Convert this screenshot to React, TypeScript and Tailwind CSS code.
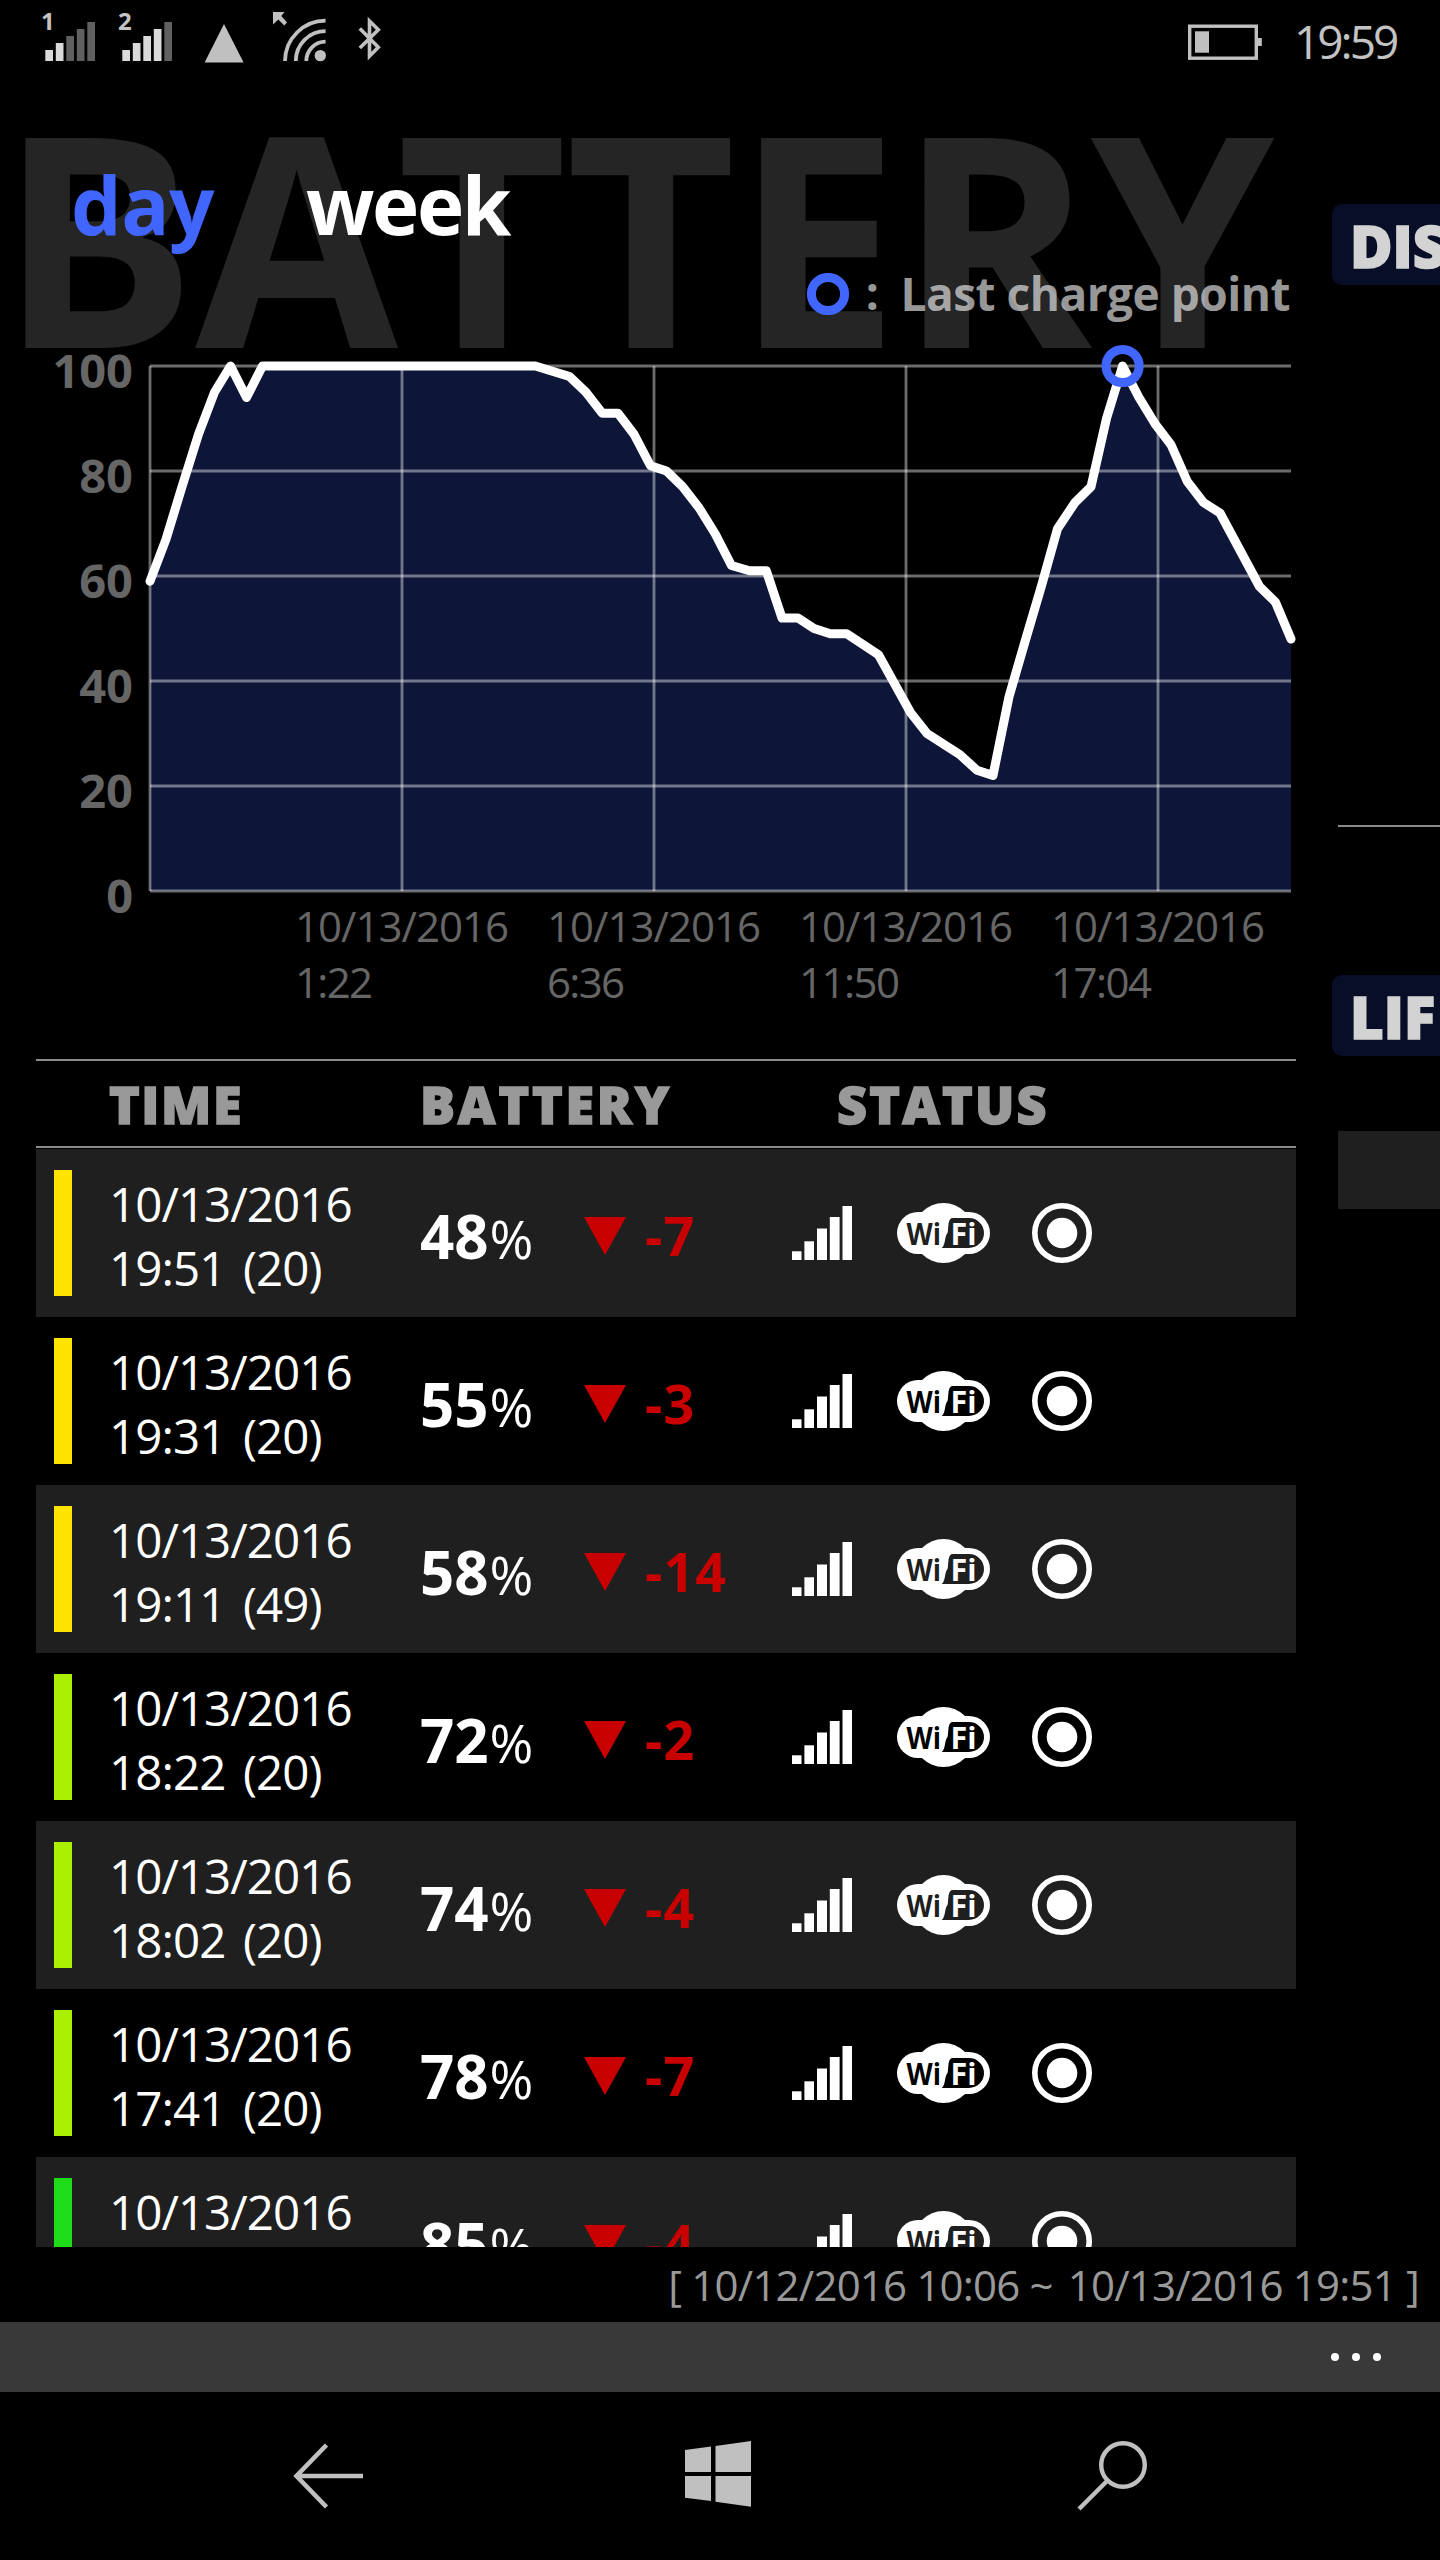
const DATA: [number, number][] = [
  [150, 59], [166, 67], [182, 77], [198.5, 87], [214.5, 95], [230.5, 100], [246.5, 94], [262.5, 100],
  [535.3, 100], [569.5, 98], [586, 95], [602.3, 91], [618, 91], [634, 87], [650.5, 81], [666.5, 80],
  [682.7, 77], [699, 73], [715.3, 68], [731.5, 62], [749.5, 61], [766.3, 61], [782, 52], [798, 52],
  [814, 50], [830.3, 49], [846.7, 49], [862.6, 47], [878.5, 45], [894.5, 39.5], [910.5, 34], [927, 30],
  [943.3, 28], [959.7, 26], [977, 23], [993, 22], [1009, 37], [1025, 47.5], [1041.3, 58], [1057.5, 69],
  [1075, 74], [1091, 77], [1106.5, 90], [1122.6, 100], [1139, 94], [1155, 89], [1171, 85], [1187.3, 78],
  [1203.5, 74], [1220, 72], [1259.5, 58], [1275.5, 55], [1291, 48],
];

const valueToY = (value: number) => 891 - value * 5.25;
const linePoints = DATA.map(([x, v]) => `${x},${valueToY(v)}`).join(" ");

const X_LABELS = [
  { x: 295, date: "10/13/2016", time: "1:22", width: 78 },
  { x: 547, date: "10/13/2016", time: "6:36", width: 78 },
  { x: 799, date: "10/13/2016", time: "11:50", width: 101 },
  { x: 1051, date: "10/13/2016", time: "17:04", width: 101 },
];

const ROWS = [
  { time: "19:51", mins: "(20)", level: 48, delta: "-7", bar: "bg-[#ffe400]" },
  { time: "19:31", mins: "(20)", level: 55, delta: "-3", bar: "bg-[#ffe400]" },
  { time: "19:11", mins: "(49)", level: 58, delta: "-14", bar: "bg-[#ffe400]" },
  { time: "18:22", mins: "(20)", level: 72, delta: "-2", bar: "bg-[#aaf000]" },
  { time: "18:02", mins: "(20)", level: 74, delta: "-4", bar: "bg-[#aaf000]" },
  { time: "17:41", mins: "(20)", level: 78, delta: "-7", bar: "bg-[#aaf000]" },
  { time: "17:21", mins: "(20)", level: 85, delta: "-4", bar: "bg-[#1edc19]" },
];

function SimSignal({ label, level }: { label: string; level: number }) {
  return (
    <div className="relative h-[64px] w-[55px]">
      <span className="absolute left-0 top-[8px] text-[24px] font-bold leading-[26px] text-[#c3c3c3]">{label}</span>
      <svg className="absolute left-0 top-0" width="55" height="64">
        {[0, 1, 2, 3, 4].map((i) => (
          <rect key={i} x={4.3 + i * 10.5} y={50 - i * 7} width="7.7" height={11 + i * 7} fill={i < level ? "#dadada" : "#606060"} />
        ))}
      </svg>
    </div>
  );
}

function StatusBar() {
  return (
    <header className="flex h-[84px] items-start justify-between pl-[41px] pr-[43px]">
      <div className="flex">
        <SimSignal label="1" level={2} />
        <div className="w-[22px]" />
        <SimSignal label="2" level={4} />
        <svg width="270" height="64" viewBox="173 0 270 64" fill="none">
          <path d="M224 24 L243.6 62.5 H204.6 Z" fill="#c0c0c0" />
          <g stroke="#c0c0c0" strokeWidth="3.8">
            <path d="M285 61 A40.6 40.6 0 0 1 325.6 20.7" />
            <path d="M295.8 61 A29.8 29.8 0 0 1 325.6 31.2" />
            <path d="M306.3 61 A19.3 19.3 0 0 1 325.6 41.7" />
          </g>
          <circle cx="320.3" cy="55.6" r="5.7" fill="#c0c0c0" />
          <path d="M273 12 H284.5 L281.3 16 L287 22.5 L284.3 25.5 L278.3 19.5 L273 24.5 Z" fill="#c0c0c0" />
          <path d="M359.8 28.5 L378.3 47.3 L369.5 56.2 V21 L378.3 29.7 L359.8 48" stroke="#c0c0c0" strokeWidth="3.6" />
        </svg>
      </div>
      <div className="flex">
        <svg width="106" height="64" viewBox="1188 0 106 64">
          <rect x="1189.7" y="26.2" width="66.6" height="32" fill="none" stroke="#c0c0c0" strokeWidth="3.4" />
          <rect x="1195" y="31.3" width="14" height="21.4" fill="#c0c0c0" />
          <rect x="1258" y="38" width="3.8" height="8" fill="#c0c0c0" />
        </svg>
        <span className="mt-[11px] w-[103px] text-[46px] leading-[60px] tracking-[-3px] text-[#c3c3c3]">19:59</span>
      </div>
    </header>
  );
}

function Chart() {
  return (
    <svg className="block" width="1332" height="737" viewBox="0 322 1332 737">
      <polygon points={`150,891 ${linePoints} 1291,891`} fill="#0d1538" />
      <g stroke="#ffffff" strokeOpacity="0.42" strokeWidth="2.8">
        {[0, 20, 40, 60, 80, 100].map((v) => (
          <line key={v} x1="150" x2="1291" y1={valueToY(v)} y2={valueToY(v)} />
        ))}
        {[150, 402, 654, 906, 1158].map((x) => (
          <line key={x} x1={x} x2={x} y1="366" y2="891" />
        ))}
      </g>
      <polyline points={linePoints} fill="none" stroke="#ffffff" strokeWidth="9" strokeLinecap="round" strokeLinejoin="round" />
      <circle cx="1122.6" cy="366" r="16.6" fill="none" stroke="#4066ff" strokeWidth="9" />
      <g fill="#666666" fontSize="47" fontWeight="700" textAnchor="end">
        {[0, 20, 40, 60, 80, 100].map((v) => (
          <text key={v} x="133" y={valueToY(v) + 22}>{v}</text>
        ))}
      </g>
      <g fill="#666666" fontSize="42">
        {X_LABELS.map((l) => (
          <g key={l.x}>
            <text x={l.x} y="942" textLength="214">{l.date}</text>
            <text x={l.x} y="998" textLength={l.width}>{l.time}</text>
          </g>
        ))}
      </g>
    </svg>
  );
}

function StatusIcons({ bg }: { bg: string }) {
  return (
    <svg className="block" width="310" height="60" viewBox="792 1203 310 60">
      <g fill="#fff">
        <rect x="792" y="1251.3" width="9.5" height="8.7" />
        <rect x="804.4" y="1241.3" width="9.6" height="18.7" />
        <rect x="817" y="1228.5" width="10" height="31.5" />
        <rect x="829.8" y="1217" width="9.8" height="43" />
        <rect x="842.5" y="1206" width="9.5" height="54" />
        <circle cx="943.5" cy="1233" r="30" />
        <rect x="897" y="1212" width="93" height="42" rx="21" />
      </g>
      <path d="M941.5 1248 C945.5 1246 944.5 1236 947.5 1233 C949 1229 947 1218 953 1218 H969 A15 15 0 0 1 969 1248 Z" fill={bg} />
      <g fontSize="30" fontWeight="700">
        <text x="906.5" y="1245" textLength="34.5" lengthAdjust="spacingAndGlyphs" fill={bg}>Wi</text>
        <text x="950.5" y="1245" textLength="26" lengthAdjust="spacingAndGlyphs" fill="#fff">Fi</text>
      </g>
      <circle cx="1062" cy="1233" r="27.2" fill="none" stroke="#fff" strokeWidth="5.6" />
      <circle cx="1062" cy="1233" r="15.3" fill="#fff" />
    </svg>
  );
}

function HistoryRow({ row, shaded }: { row: (typeof ROWS)[number]; shaded: boolean }) {
  return (
    <li className={`flex h-[168px] shrink-0 pl-[18px] ${shaded ? "bg-[#1f1f1f]" : "bg-black"}`}>
      <div className={`mt-[21px] h-[126px] w-[18px] ${row.bar}`} />
      <div className="ml-[37px] mt-[23px] w-[311px] text-[47.5px] leading-[64px] tracking-[-0.95px] text-white">
        <div>10/13/2016</div>
        <div className="flex">
          <span className="w-[134px]">{row.time}</span>
          <span>{row.mins}</span>
        </div>
      </div>
      <div className="mt-[47px] flex w-[164px] items-baseline leading-[80px] text-white">
        <span className="w-[69.5px] text-[60px] font-bold">{row.level}</span>
        <span className="text-[53px]">%</span>
      </div>
      <svg className="mt-[68px]" width="42" height="38">
        <path d="M0 0 H42 L21 38 Z" fill="#c80000" />
      </svg>
      <span className="ml-[19px] mt-[46px] w-[147px] text-[54px] font-bold leading-[80px] tracking-[1px] text-[#c80000]">{row.delta}</span>
      <div className="mt-[54px]">
        <StatusIcons bg={shaded ? "#1f1f1f" : "#000"} />
      </div>
    </li>
  );
}

function SidePanel() {
  return (
    <aside className="w-[108px] overflow-hidden pt-[120px] text-[58px] font-extrabold leading-[81px] text-[#d3d3d3] [-webkit-text-stroke:1.6px_#d3d3d3]">
      <div className="h-[81px] w-[140px] rounded-[10px] bg-[#080e28] pl-[18px]">
        <div className="pt-px">DIS</div>
      </div>
      <div className="ml-[6px] mt-[540px] h-[2px] bg-[#8a8a8a]" />
      <div className="mt-[148px] h-[81px] w-[140px] rounded-[10px] bg-[#080e28] pl-[18px]">
        <div className="pt-px">LIF</div>
      </div>
      <div className="ml-[6px] mt-[75px] h-[78px] bg-[#1f1f1f]" />
    </aside>
  );
}

export default function App() {
  return (
    <div className="relative h-[2560px] w-[1440px] overflow-hidden bg-black font-['Open_Sans','Noto_Sans',sans-serif]">
      <StatusBar />
      <main className="relative h-[2163px]">
        <h1 className="pointer-events-none absolute left-[-1px] top-0 text-[294px] font-bold leading-[300px] tracking-[-1.3px] text-[#252525]">BATTERY</h1>
        <div className="relative flex h-full">
          <section className="w-[1332px]">
            <nav className="flex pl-[71px] pt-[70px] text-[80px] font-bold leading-[100px]">
              <span className="w-[235px] tracking-[-0.5px] text-[#4066ff]">day</span>
              <span className="tracking-[-2.4px] text-white">week</span>
            </nav>
            <div className="mt-[8px] flex h-[60px] items-center justify-end pr-[42px] text-[46px] font-bold leading-[60px] tracking-[-0.5px] text-white/60">
              <svg className="mr-[17px] mt-[4px]" width="42" height="42">
                <circle cx="21" cy="21" r="16.6" fill="none" stroke="#4066ff" strokeWidth="9" />
              </svg>
              <span className="mr-[22px]">:</span>
              <span className="pt-px">Last charge point</span>
            </div>
            <Chart />
            <div className="ml-[36px] flex h-[89px] w-[1260px] border-y-2 border-[#8a8a8a] pl-[73px] text-[52px] font-extrabold leading-[85px] tracking-[1.6px] text-[#999999] [-webkit-text-stroke:1.5px_#999999]">
              <span className="w-[311px]">TIME</span>
              <span className="w-[417px] tracking-[2.8px]">BATTERY</span>
              <span className="tracking-[2.2px]">STATUS</span>
            </div>
            <ul className="ml-[36px] mt-px flex h-[1098px] w-[1260px] flex-col overflow-hidden">
              {ROWS.map((row, i) => (
                <HistoryRow key={row.time} row={row} shaded={i % 2 === 0} />
              ))}
            </ul>
          </section>
          <SidePanel />
        </div>
      </main>
      <div className="flex h-[75px] justify-end pr-[21px] text-[42px] leading-[76px] tracking-[-0.8px] text-[#999999]">
        <span>[ 10/12/2016 10:06 ~</span>
        <span className="ml-[15px]">10/13/2016 19:51 ]</span>
      </div>
      <div className="flex h-[70px] items-center justify-end gap-[13.4px] bg-[#393939] pr-[59px]">
        <i className="size-[7.6px] rounded-full bg-white" />
        <i className="size-[7.6px] rounded-full bg-white" />
        <i className="size-[7.6px] rounded-full bg-white" />
      </div>
      <footer className="flex h-[168px] items-start pl-[290px] pt-[44px]">
        <svg width="76" height="80" viewBox="290 2436 76 80" fill="none" stroke="#c0c0c0" strokeWidth="4.6">
          <path d="M363 2476 H297 M326.5 2445 L296.5 2476 L326.5 2507" />
        </svg>
        <svg className="ml-[317px]" width="70" height="80" viewBox="683 2436 70 80" fill="#c0c0c0">
          <path d="M685 2450 L711 2446.6 V2472 H685 Z M715.5 2446 L751 2441 V2472 H715.5 Z M685 2476 H711 V2501 L685 2497.8 Z M715.5 2476 H751 V2506.8 L715.5 2501.7 Z" />
        </svg>
        <svg className="ml-[323px]" width="76" height="80" viewBox="1076 2436 76 80" fill="none" stroke="#c0c0c0" strokeWidth="4.4">
          <circle cx="1123" cy="2465" r="21.8" />
          <path d="M1107.5 2480.5 L1079 2509" />
        </svg>
      </footer>
    </div>
  );
}
